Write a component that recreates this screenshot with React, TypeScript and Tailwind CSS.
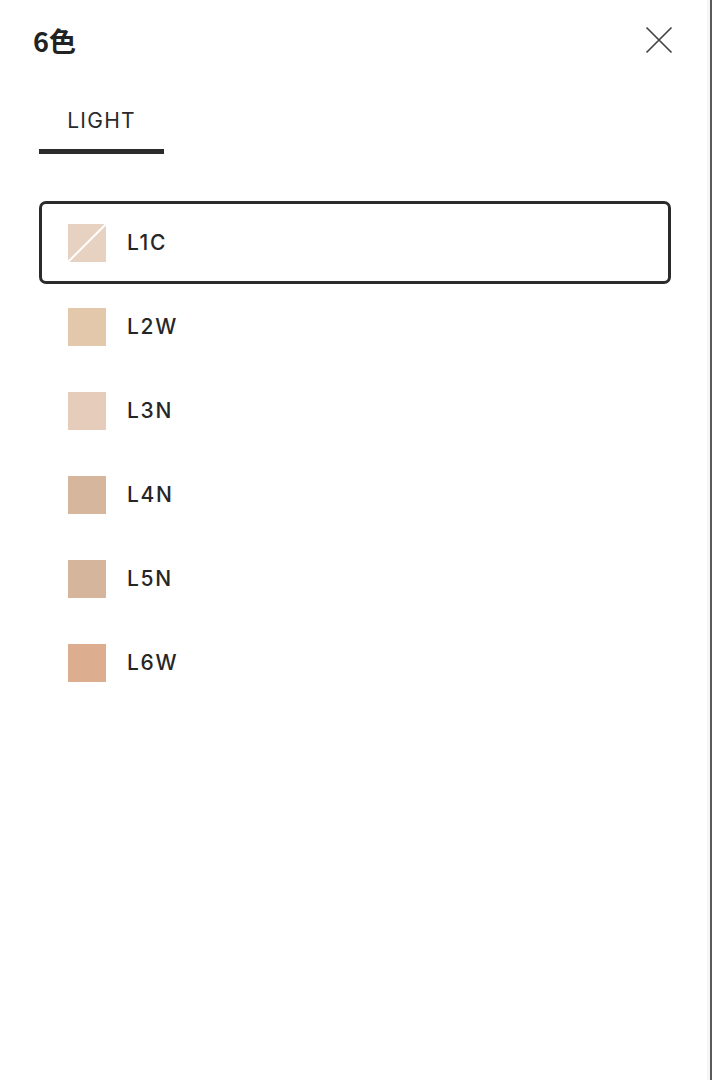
import { useState } from "react";

const shades = [
  { code: "L1C", color: "#e7d1c1", unavailable: true },
  { code: "L2W", color: "#e4c8ab" },
  { code: "L3N", color: "#e6ccba" },
  { code: "L4N", color: "#d6b69c" },
  { code: "L5N", color: "#d5b69d" },
  { code: "L6W", color: "#dcae8f" },
];

function Swatch({ color, unavailable }: { color: string; unavailable?: boolean }) {
  return (
    <div className="w-[38px] h-[38px] shrink-0" style={{ background: color }}>
      {unavailable && (
        <svg viewBox="0 0 38 38" className="w-full h-full block">
          <line x1="0" y1="38" x2="38" y2="0" stroke="#fff" strokeWidth="2" />
        </svg>
      )}
    </div>
  );
}

export default function App() {
  const [selected, setSelected] = useState("L1C");

  return (
    <div
      className="flex min-h-[1080px] w-[712px] bg-white text-[#222]"
      style={{ fontFamily: "Inter, 'Noto Sans CJK JP', sans-serif" }}
    >
      <div className="flex-1 flex flex-col">
        {/* Header */}
        <div className="flex items-center justify-between pl-[33px] pr-[34px] pt-[24px] h-[56px]">
          <h2
            className="text-[27px] font-semibold leading-none"
            style={{ fontFamily: "'Noto Sans CJK JP', sans-serif" }}
          >
            6色
          </h2>
          <button className="w-[28px] h-[28px] flex items-center justify-center">
            <svg viewBox="0 0 28 28" className="w-[28px] h-[28px]">
              <path d="M1.5 1.5 L26.5 26.5 M26.5 1.5 L1.5 26.5" stroke="#444" strokeWidth="1.7" fill="none" />
            </svg>
          </button>
        </div>

        {/* Tabs */}
        <div className="pl-[39px] mt-[54px]">
          <div className="w-[125px] flex flex-col items-center">
            <span className="text-[21px] tracking-[0.06em] leading-none font-normal text-[#2a2a2a]">LIGHT</span>
            <div className="w-full h-[5px] bg-[#2b2b2b] mt-[18px]" />
          </div>
        </div>

        {/* Shade list */}
        <div className="flex flex-col gap-[1px] pl-[39px] pr-[36px] mt-[47px]">
          {shades.map((s) => (
            <button
              key={s.code}
              onClick={() => setSelected(s.code)}
              className={
                "flex items-center gap-[21px] h-[83px] pl-[26px] rounded-[7px] border-[3px] text-left " +
                (selected === s.code ? "border-[#2b2b2b]" : "border-transparent")
              }
            >
              <Swatch color={s.color} unavailable={s.unavailable} />
              <span className="text-[21px] font-medium tracking-[0.08em] text-[#262626]">{s.code}</span>
            </button>
          ))}
        </div>
      </div>
      <div className="w-[3px] bg-[#f6f6f6]" />
      <div className="w-[2px] bg-[#5a5a5a]" />
    </div>
  );
}
